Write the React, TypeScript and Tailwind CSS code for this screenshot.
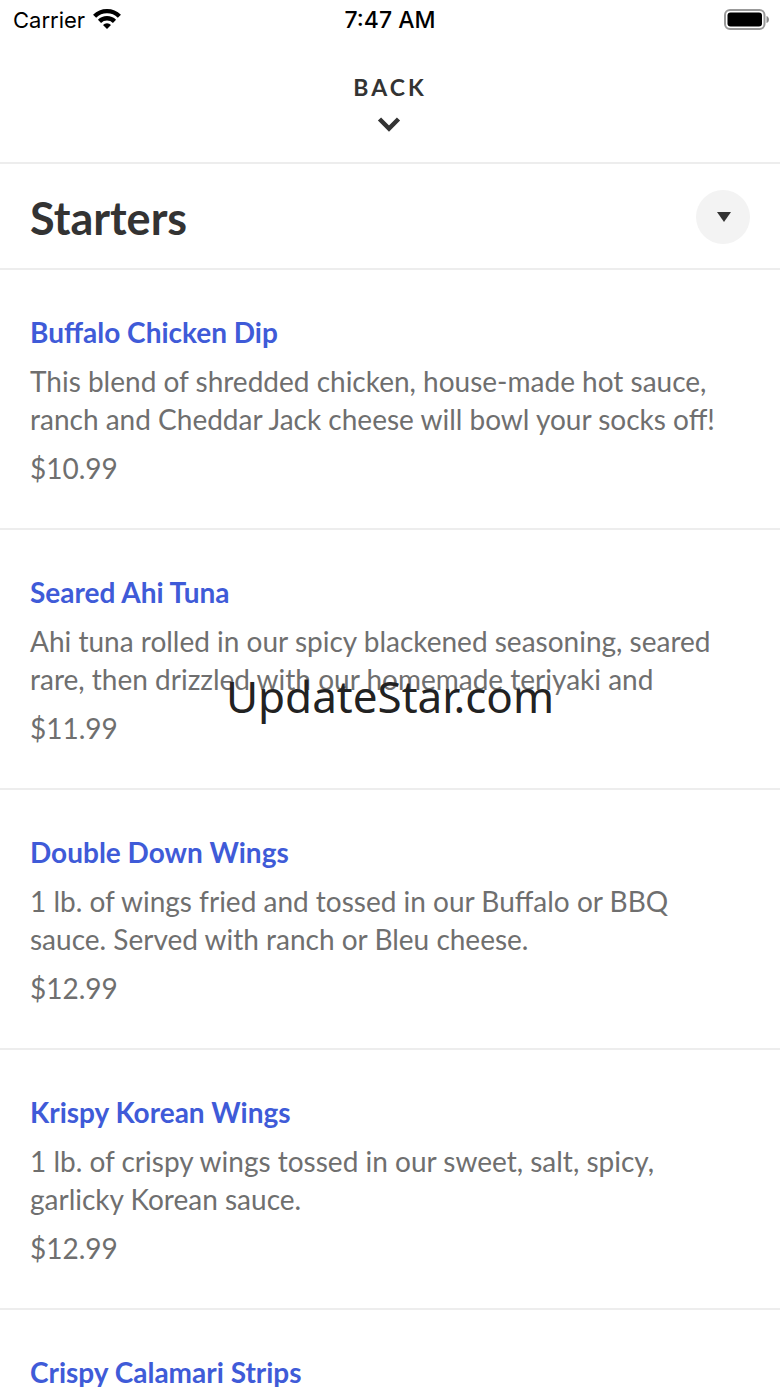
interface MenuItem {
  name: string;
  description: string;
  price: string;
}

const items: MenuItem[] = [
  {
    name: "Buffalo Chicken Dip",
    description:
      "This blend of shredded chicken, house-made hot sauce, ranch and Cheddar Jack cheese will bowl your socks off!",
    price: "$10.99",
  },
  {
    name: "Seared Ahi Tuna",
    description:
      "Ahi tuna rolled in our spicy blackened seasoning, seared rare, then drizzled with our homemade teriyaki and",
    price: "$11.99",
  },
  {
    name: "Double Down Wings",
    description:
      "1 lb. of wings fried and tossed in our Buffalo or BBQ sauce. Served with ranch or Bleu cheese.",
    price: "$12.99",
  },
  {
    name: "Krispy Korean Wings",
    description:
      "1 lb. of crispy wings tossed in our sweet, salt, spicy, garlicky Korean sauce.",
    price: "$12.99",
  },
  {
    name: "Crispy Calamari Strips",
    description: "",
    price: "",
  },
];

function WifiIcon() {
  return (
    <svg className="mb-1 h-[21px] w-7" viewBox="0 0 28 21" fill="none" stroke="currentColor" strokeWidth="4.400">
      <path d="M1.600 8.200a17.600 17.600 0 0 1 24.800 0" />
      <path d="M6.500 13.400a10.600 10.600 0 0 1 15 0" />
      <path d="M14 21l-4-4a5.700 5.700 0 0 1 8 0z" fill="currentColor" stroke="none" />
    </svg>
  );
}

function BatteryIcon() {
  return (
    <svg className="h-[22px] w-[46px] justify-self-end" viewBox="0 0 46 22">
      <rect x="1" y="1" width="39.500" height="19" rx="5" fill="none" stroke="#999" strokeWidth="2" />
      <rect x="3.500" y="3.500" width="34.500" height="14" rx="3" />
      <path d="M42.500 7c3.300 1 3.300 6 0 7z" fill="#888" />
    </svg>
  );
}

function StatusBar() {
  return (
    <div className="grid h-10 grid-cols-3 items-center pr-2.5 pl-[13px] font-['Inter',sans-serif] text-black">
      <div className="flex items-center gap-2 text-[22px]">
        <span>Carrier</span>
        <WifiIcon />
      </div>
      <span className="pr-[3px] text-center text-[23px] font-medium">7:47 AM</span>
      <BatteryIcon />
    </div>
  );
}

function MenuRow({ item }: { item: MenuItem }) {
  return (
    <li className="border-b-2 border-[#ededed] px-[30px] pt-[43px] pb-[41px] text-[28px] leading-[38px] text-[#6f6f6f]">
      <h2 className="font-bold text-[#3f5bd8]">{item.name}</h2>
      {item.description && <p className="mt-[11px]">{item.description}</p>}
      {item.price && <p className="mt-[11px]">{item.price}</p>}
    </li>
  );
}

export default function App() {
  return (
    <div className="relative h-screen overflow-hidden bg-white font-['Lato',sans-serif]">
      <StatusBar />
      <button className="flex w-full flex-col items-center border-b-2 border-[#ededed] pt-[31px] pb-[30px] text-[#333]">
        <span className="text-[23px] leading-8 font-bold tracking-[3px]">BACK</span>
        <svg className="mt-[13px] mr-0.5 h-4 w-6" viewBox="0 0 24 16" fill="none" stroke="currentColor" strokeWidth="4.500">
          <path d="M2.500 3L12 12.500L21.500 3" />
        </svg>
      </button>
      <header className="flex items-center justify-between border-b-2 border-[#ededed] px-[30px] pt-[26px] pb-6">
        <h1 className="pt-0.5 text-[45px] leading-[52px] font-bold text-[#333]">Starters</h1>
        <button
          aria-label="Choose category"
          className="flex size-[54px] items-center justify-center rounded-full bg-[#f3f3f3]"
        >
          <svg className="ml-0.5 h-2.5 w-3.5" viewBox="0 0 14 10" fill="#333">
            <path d="M0 0h14L7 10z" />
          </svg>
        </button>
      </header>
      <ul>
        {items.map((item) => (
          <MenuRow key={item.name} item={item} />
        ))}
      </ul>
      <div className="pointer-events-none absolute inset-0 flex items-center justify-center pt-1 font-['Noto_Sans',sans-serif] text-[44px] text-[#222]">
        UpdateStar.com
      </div>
    </div>
  );
}
